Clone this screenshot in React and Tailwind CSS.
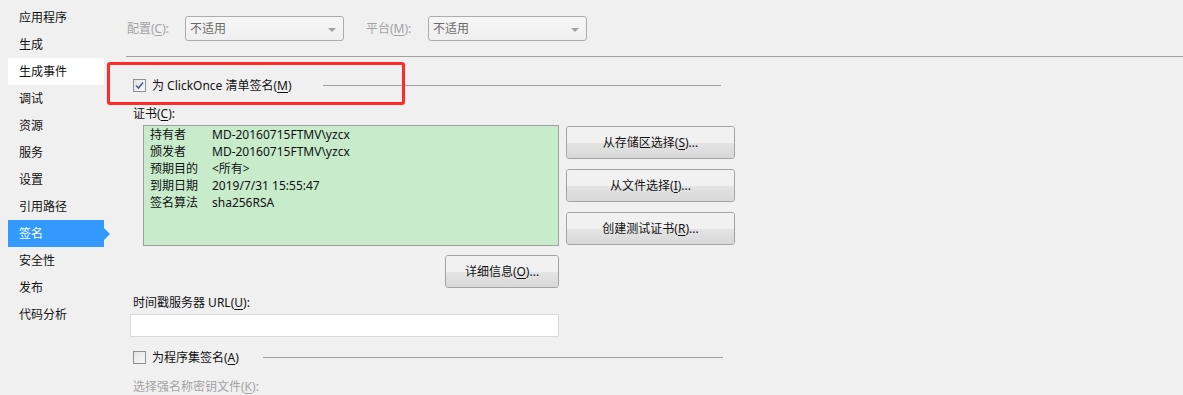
import React from "react";

const U = ({ children }) => <span className="underline underline-offset-2">{children}</span>;

function Select({ text }) {
  return (
    <div className="relative h-[25px] w-[159px] rounded-[3px] border border-[#acacac] bg-gradient-to-b from-[#f6f6f6] to-[#efefef] pl-[4px] leading-[23px] text-[#6a6a6a]">
      {text}
      <span className="absolute right-[7px] top-[11px] h-0 w-0 border-x-[4px] border-t-[4px] border-x-transparent border-t-[#a0a0a0]" />
    </div>
  );
}

function Btn({ children, w }) {
  return (
    <div
      className={`${w} relative flex h-[33px] items-center justify-center overflow-hidden rounded-[3px] border border-[#a3a3a3] text-[#111]`}
    >
      <div className="absolute inset-0 flex flex-col">
        <div className="h-1/2 bg-[#f1f1f1]" />
        <div className="h-1/2 bg-gradient-to-b from-[#e4e4e4] to-[#d8d8d8]" />
      </div>
      <span className="relative">{children}</span>
    </div>
  );
}

function Checkbox({ checked }) {
  return (
    <div className="flex h-[13px] w-[13px] items-center justify-center border border-[#8e8f8f] bg-gradient-to-br from-[#e4e4e4] to-[#f8f8f8]">
      {checked && (
        <svg width="9" height="9" viewBox="0 0 9 9">
          <path d="M1 4.5 L3.5 7 L8 1.5" fill="none" stroke="#4a5f97" strokeWidth="1.6" />
        </svg>
      )}
    </div>
  );
}

const navItems = ["应用程序", "生成", "生成事件", "调试", "资源", "服务", "设置", "引用路径", "签名", "安全性", "发布", "代码分析"];

export default function App() {
  return (
    <div
      className="relative flex h-[395px] w-[1183px] overflow-hidden bg-[#f0f0f0] text-[12px] text-[#111]"
      style={{ fontFamily: '"Noto Sans", "Noto Sans CJK SC", sans-serif' }}
    >
      {/* sidebar */}
      <div className="w-[126px] shrink-0 pt-[4px]">
        {navItems.map((n) => {
          const hover = n === "生成事件";
          const sel = n === "签名";
          return (
            <div
              key={n}
              className={`relative ml-[8px] h-[27px] w-[96px] pl-[11px] leading-[27px] ${
                hover ? "bg-white" : ""
              } ${sel ? "bg-[#3399ff] text-white" : ""}`}
            >
              {n}
              {sel && (
                <span className="absolute right-[-6px] top-[7.5px] h-0 w-0 border-y-[6px] border-l-[6px] border-y-transparent border-l-[#3399ff]" />
              )}
            </div>
          );
        })}
      </div>

      {/* main */}
      <div className="flex flex-1 flex-col">
        <div className="flex items-center pt-[16px]">
          <span className="w-[59px] pl-[1px] text-[#a3a3a3]">
            配置(<U>C</U>):
          </span>
          <Select text="不适用" />
          <span className="ml-[22px] w-[62px] text-[#a3a3a3]">
            平台(<U>M</U>):
          </span>
          <Select text="不适用" />
        </div>
        <div className="mt-[15px] h-px w-full bg-[#a0a0a0]" />

        <div className="ml-[7px] mt-[20px] flex h-[17px] w-[588px] items-center justify-between">
          <div className="flex items-center">
            <Checkbox checked />
            <span className="ml-[6px] leading-[17px]">
              为 ClickOnce 清单签名(<U>M</U>)
            </span>
          </div>
          <div className="h-px w-[398px] bg-[#a0a0a0]" />
        </div>

        <div className="ml-[7px] mt-[11px] h-[17px] leading-[17px]">
          证书(<U>C</U>):
        </div>

        <div className="ml-[17px] mt-[3px] flex">
          <div className="h-[121px] w-[416px] border border-[#a0a0a0] bg-[#c7ebcb] pl-[6px]">
            {[
              ["持有者", "MD-20160715FTMV\\yzcx"],
              ["颁发者", "MD-20160715FTMV\\yzcx"],
              ["预期目的", "<所有>"],
              ["到期日期", "2019/7/31 15:55:47"],
              ["签名算法", "sha256RSA"],
            ].map(([k, v]) => (
              <div key={k} className="flex h-[17px] leading-[17px]">
                <span className="w-[62px]">{k}</span>
                <span>{v}</span>
              </div>
            ))}
          </div>
          <div className="ml-[7px] mt-[1px] flex flex-col gap-[10px]">
            <Btn w="w-[169px]">
              从存储区选择(<U>S</U>)...
            </Btn>
            <Btn w="w-[169px]">
              从文件选择(<U>I</U>)...
            </Btn>
            <Btn w="w-[169px]">
              创建测试证书(<U>R</U>)...
            </Btn>
          </div>
        </div>

        <div className="ml-[319px] mt-[9px]">
          <Btn w="w-[114px]">
            详细信息(<U>O</U>)...
          </Btn>
        </div>

        <div className="ml-[7px] mt-[6px] h-[17px] leading-[17px]">
          时间戳服务器 URL(<U>U</U>):
        </div>
        <div className="ml-[4px] mt-[3px] h-[23px] w-[429px] border border-[#d9d9d9] bg-white" />

        <div className="ml-[7px] mt-[12px] flex h-[17px] w-[590px] items-center justify-between">
          <div className="flex items-center">
            <Checkbox />
            <span className="ml-[6px] leading-[17px]">
              为程序集签名(<U>A</U>)
            </span>
          </div>
          <div className="h-px w-[460px] bg-[#a0a0a0]" />
        </div>

        <div className="ml-[7px] mt-[12px] h-[17px] leading-[17px] text-[#a3a3a3]">
          选择强名称密钥文件(<U>K</U>):
        </div>
      </div>

      {/* red annotation box */}
      <div className="pointer-events-none absolute left-[107px] top-[62px] h-[43px] w-[298px] rounded-[3px] border-[3px] border-[#ff2a2a]" />
    </div>
  );
}
